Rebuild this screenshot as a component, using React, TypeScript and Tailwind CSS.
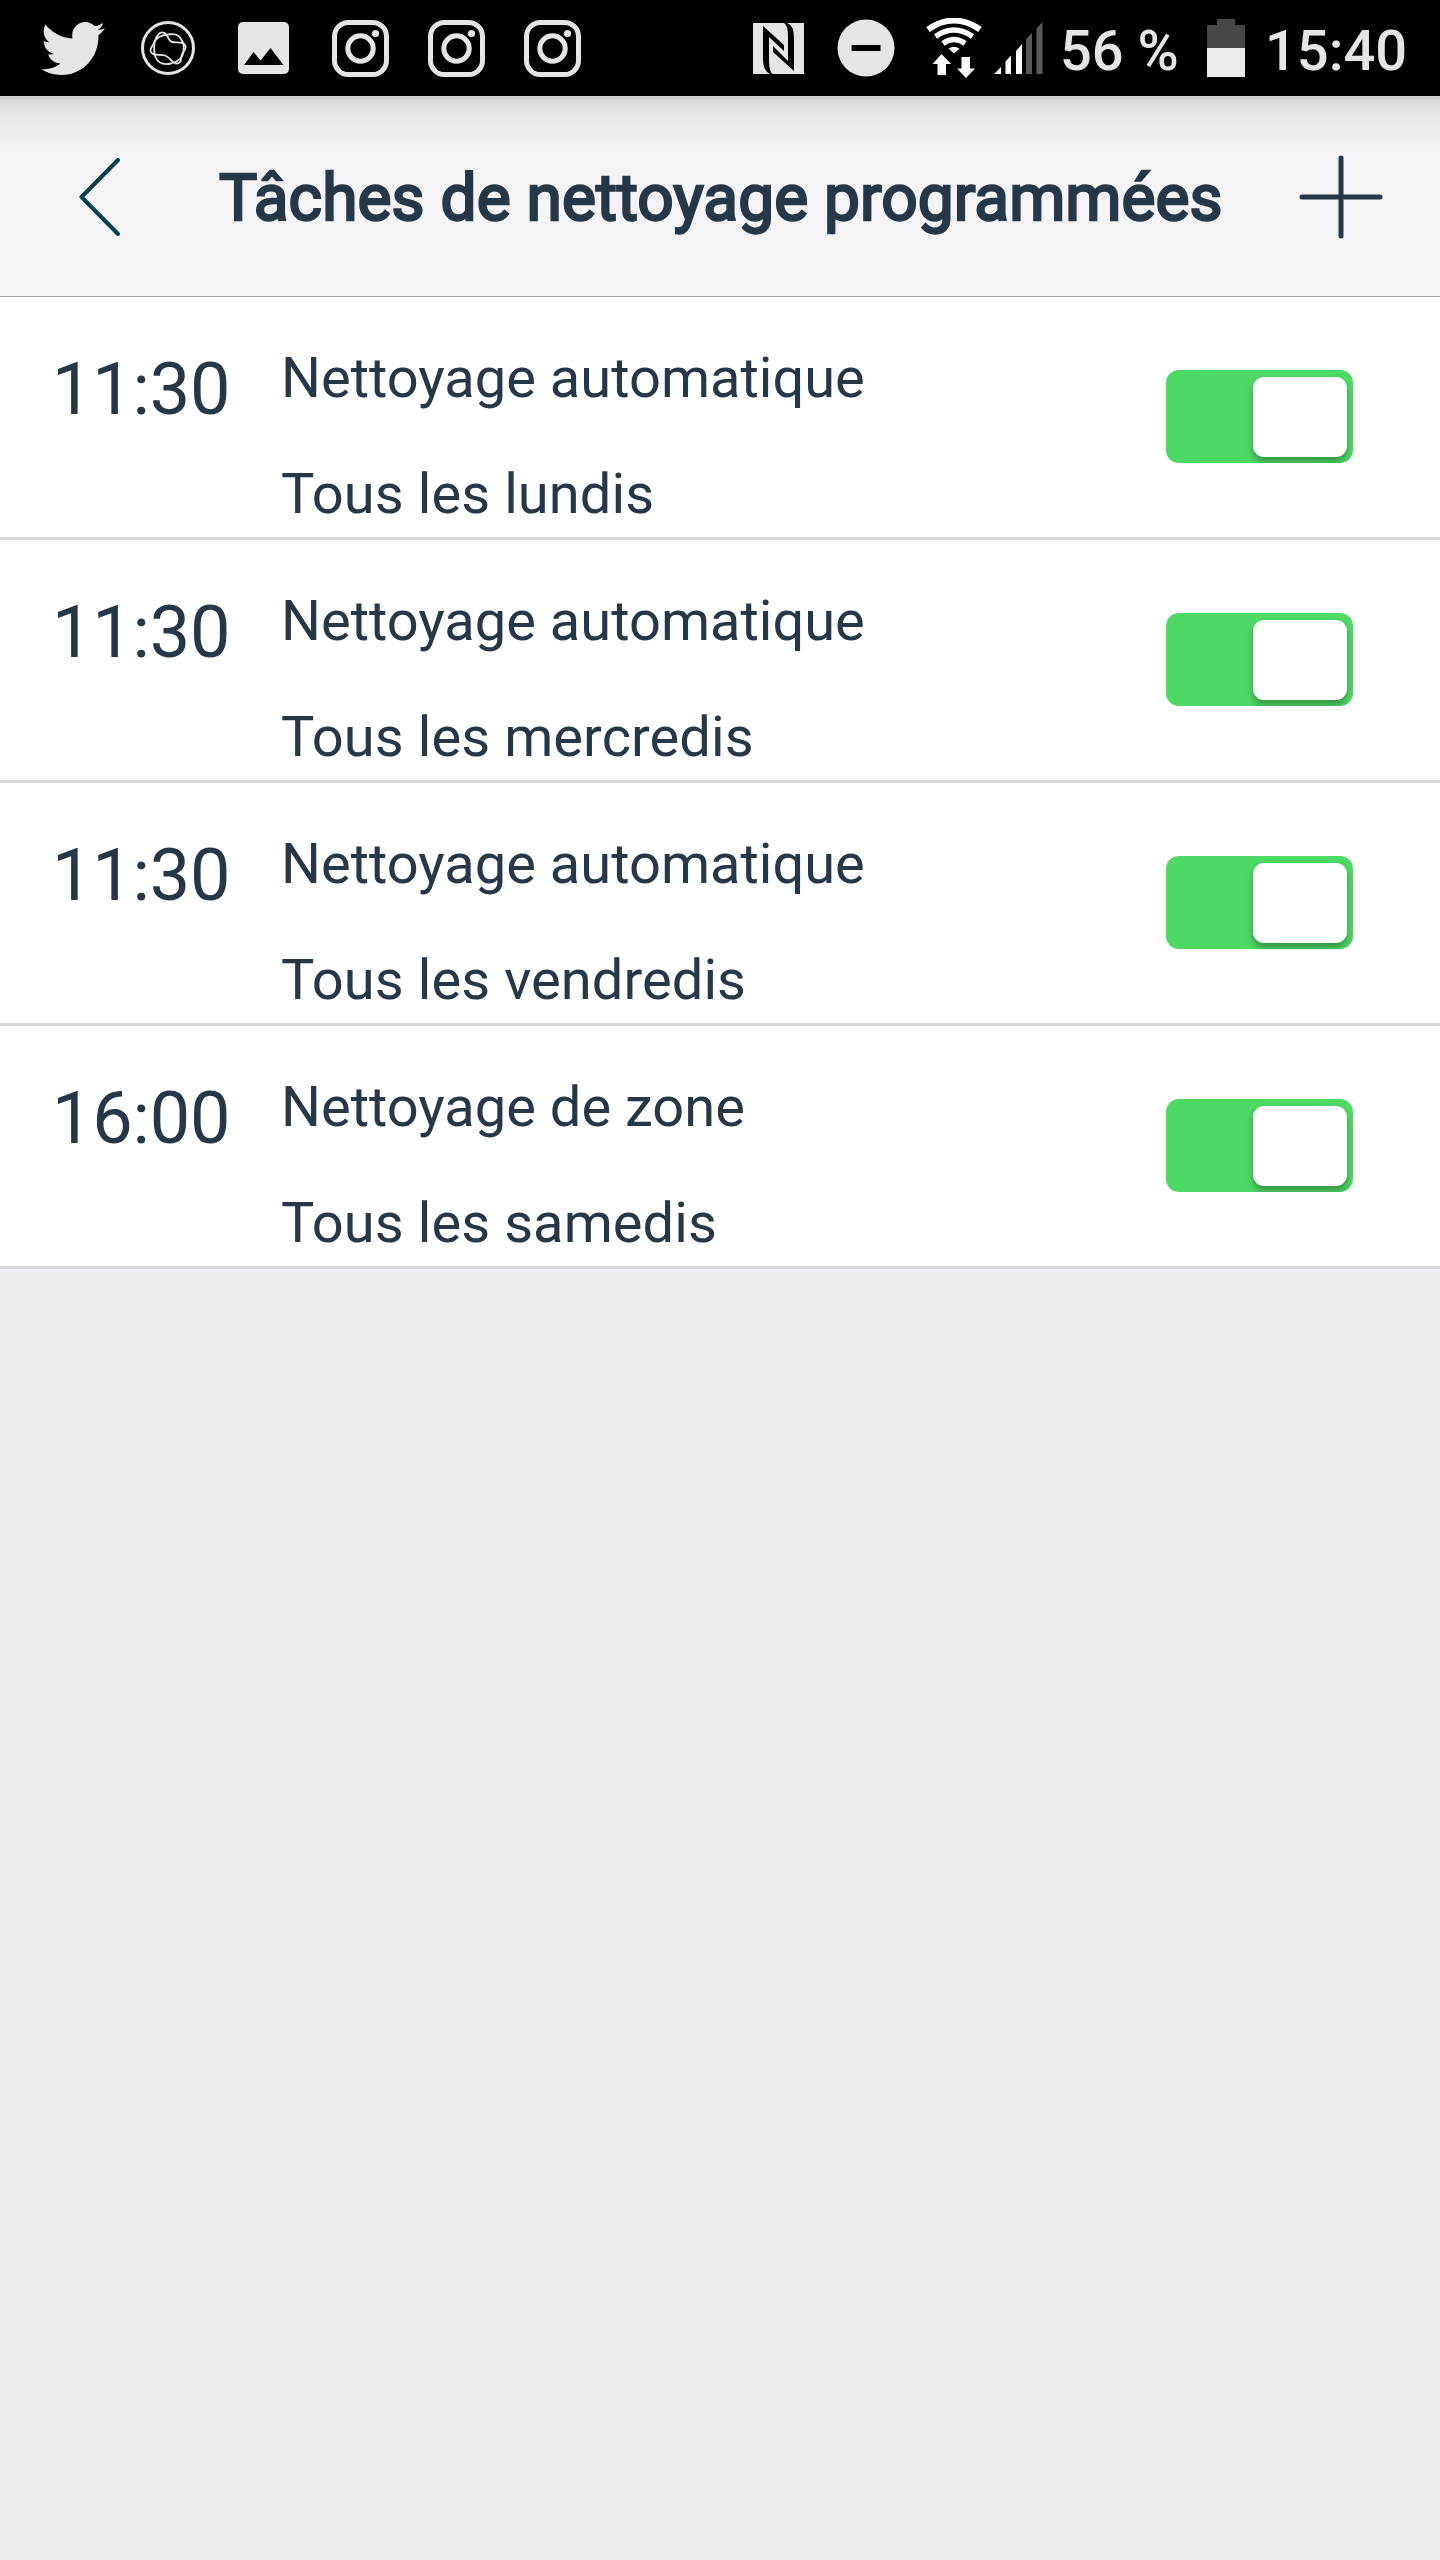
import React from 'react';

interface Task {
  time: string;
  mode: string;
  days: string;
}

const tasks: Task[] = [
  { time: '11:30', mode: 'Nettoyage automatique', days: 'Tous les lundis' },
  { time: '11:30', mode: 'Nettoyage automatique', days: 'Tous les mercredis' },
  { time: '11:30', mode: 'Nettoyage automatique', days: 'Tous les vendredis' },
  { time: '16:00', mode: 'Nettoyage de zone', days: 'Tous les samedis' },
];

const TwitterIcon = () => (
  <svg className="h-[53px] w-[64px]" viewBox="0 48 512 416" preserveAspectRatio="none" fill="currentColor">
    <path d="M459.37 151.716c.325 4.548.325 9.097.325 13.645 0 138.72-105.583 298.558-298.558 298.558-59.452 0-114.68-17.219-161.137-47.106 8.447.974 16.568 1.299 25.34 1.299 49.055 0 94.213-16.568 130.274-44.832-46.132-.975-84.792-31.188-98.112-72.772 6.498.974 12.995 1.624 19.818 1.624 9.421 0 18.843-1.3 27.614-3.573-48.081-9.747-84.143-51.98-84.143-102.985v-1.299c13.969 7.797 30.214 12.67 47.431 13.319-28.264-18.843-46.781-51.005-46.781-87.391 0-19.492 5.197-37.36 14.294-52.954 51.655 63.675 129.3 105.258 216.365 109.807-1.624-7.797-2.599-15.918-2.599-24.04 0-57.828 46.782-104.934 104.934-104.934 30.213 0 57.502 12.67 76.67 33.137 23.715-4.548 46.456-13.32 66.599-25.34-7.798 24.366-24.366 44.833-46.132 57.827 21.117-2.273 41.584-8.122 60.426-16.243-14.292 20.791-32.161 39.308-52.628 54.253z" />
  </svg>
);

const CircleIcon = () => (
  <svg className="size-[54px]" viewBox="0 0 54 54" fill="none" stroke="currentColor">
    <circle cx="27" cy="27" r="25.500" strokeWidth="3" />
    <g strokeWidth="1.800">
      <path d="M14 20C16 14 18 11 22 11.500C27 12 27 20 31 21C36 22 43 20 44.500 25C45.500 29 41 31 40.500 35C40 39 40 42 36 42.500C31 43 29 36 24 34.500C18 33 10 35 9.500 30C9 26 13 24 14 20Z" />
      <path d="M13.500 22C14 17 21 14 27 13.500C33 12.500 37 13 40 18C43 23 43 24 42.500 30C42 38 36 41 30 42.500C23 44 17 42 14.500 36C13 32 13 26 13.500 22Z" />
    </g>
  </svg>
);

const PictureIcon = () => (
  <svg className="h-[52px] w-[51px]" viewBox="0 0 51 52">
    <rect width="51" height="52" rx="5" fill="currentColor" />
    <path d="M6 43 L15.500 30 L22.500 38.500 L32.500 26 L45.500 43Z" fill="#000" />
  </svg>
);

const InstagramIcon = () => (
  <svg className="size-[57px]" viewBox="0 0 57 57" fill="none" stroke="currentColor" strokeWidth="5">
    <rect x="2.500" y="2.500" width="52" height="52" rx="14" />
    <circle cx="28.500" cy="28.500" r="12.700" />
    <circle cx="43.500" cy="13.500" r="3.600" fill="currentColor" stroke="none" />
  </svg>
);

const NfcIcon = () => (
  <svg className="h-[51px] w-[51px]" viewBox="0 0 51 51">
    <rect width="51" height="51" fill="currentColor" />
    <path d="M10 3 L31 22 V28 L16 14 V37 Q16 50 20 51 H17 Q10 48 10 36Z" fill="#000" />
    <path d="M41 48 L20 29 V23 L35 38 V14 Q35 2 31 0 H34 Q41 2 41 15Z" fill="#000" />
  </svg>
);

const DoNotDisturbIcon = () => (
  <svg className="size-[58px]" viewBox="0 0 58 58">
    <circle cx="29" cy="29" r="28.500" fill="currentColor" />
    <rect x="14.500" y="26" width="29" height="6" fill="#000" />
  </svg>
);

const WifiIcon = () => (
  <svg className="h-[60px] w-[56px]" viewBox="0 0 56 60" fill="none" stroke="#fff">
    <path d="M2 11.500 Q28 -6.500 54 11.500" strokeWidth="6" />
    <path d="M9.500 18.500 Q28 5.500 46.500 18.500" strokeWidth="5.500" />
    <path d="M17 25.500 Q28 17.500 39 25.500" strokeWidth="5.500" />
    <path d="M22.500 30.500 Q28 27 33.500 30.500 L28 35.500Z" fill="#fff" stroke="none" />
    <path d="M15.500 36 L25 46 H20 V57 H11.500 V46 H6.500Z" fill="#fff" stroke="none" />
    <path d="M40 60 L49 50.500 H44 V39 H35.500 V50.500 H31Z" fill="#fff" stroke="none" />
  </svg>
);

const SignalIcon = () => (
  <svg className="h-[52px] w-[49px]" viewBox="0 0 49 52" fill="#fff">
    <path d="M0 52 L7 45 V52Z M11.500 52 V39.500 L17 33.500 V52Z M22 52 V29 L28 22 V52Z" />
    <path d="M32 52 V17 L38 11 V52Z M42.500 52 V6.500 L48.500 0 V52Z" fill="#5a5a5a" />
  </svg>
);

const BatteryIcon = () => (
  <svg className="h-[58px] w-[38px]" viewBox="0 0 38 58">
    <path d="M0 6 H10 V0 H28 V6 H38 V29 H0Z" fill="#464646" />
    <rect y="29" width="38" height="29" fill="#ebebeb" />
  </svg>
);

const StatusBar = () => (
  <div className="flex h-24 items-center bg-black pl-[41px] text-[56px] leading-none font-medium text-[#e5e5e5]">
    <TwitterIcon />
    <div className="ml-[36px]"><CircleIcon /></div>
    <div className="ml-[43px]"><PictureIcon /></div>
    <div className="ml-[43px] flex gap-[39px]">
      <InstagramIcon />
      <InstagramIcon />
      <InstagramIcon />
    </div>
    <div className="ml-[172px]"><NfcIcon /></div>
    <div className="ml-[33px]"><DoNotDisturbIcon /></div>
    <div className="ml-[31px]"><WifiIcon /></div>
    <div className="ml-[12px]"><SignalIcon /></div>
    <div className="ml-[17px] w-[147px] whitespace-nowrap pt-[6px]">56 %</div>
    <div><BatteryIcon /></div>
    <div className="ml-[20px] pt-[6px]">15:40</div>
  </div>
);

const Header = () => (
  <div className="flex h-[201px] items-center border-b border-[#a3a3a8] bg-[#f4f4f7] bg-[linear-gradient(to_bottom,#cfcfcf_0px,#cfcfcf_3px,#dadadc_4px,#e6e6e7_20px,#efeff1_38px,#f4f4f7_54px)] pt-[2px] pl-[79px]">
    <svg className="h-[78px] w-[41px]" viewBox="0 0 41 78" fill="none" stroke="#043f4e" strokeWidth="4">
      <path d="M39 2 L2.500 39 L39 76" strokeLinecap="round" strokeLinejoin="round" />
    </svg>
    <h1 className="ml-[99px] w-[1002px] pt-[3px] text-[64px] leading-none font-normal tracking-[0.06px] whitespace-nowrap text-[#263747] [-webkit-text-stroke:2.4px_#263747]">
      Tâches de nettoyage programmées
    </h1>
    <svg className="ml-[78px] size-[84px]" viewBox="0 0 84 84" stroke="#263747" strokeWidth="5" strokeLinecap="round">
      <path d="M42 3 V81 M3 42 H81" />
    </svg>
  </div>
);

const Toggle = () => (
  <div className="flex h-[93px] w-[187px] justify-end overflow-hidden rounded-[13px] bg-[#4cd964] pt-[6.5px] pr-[6.5px]">
    <div className="h-[80px] w-[94px] rounded-[11px] bg-white shadow-[0_5px_7px_rgba(0,0,0,0.3)]" />
  </div>
);

const TaskRow = ({ task }: { task: Task }) => (
  <div className="flex h-[243px] border-b-[3px] border-[#d7d7db] bg-white text-[#263747]">
    <div className="w-[281px] pt-[55px] pl-[52px] text-[72px] leading-[76px] tracking-[-0.2px]">{task.time}</div>
    <div className="flex-1 pt-[46px] text-[56px] leading-[70px] whitespace-nowrap">
      <div>{task.mode}</div>
      <div className="mt-[46px] tracking-[0.08px]">{task.days}</div>
    </div>
    <div className="pt-[73px] pr-[87px]">
      <Toggle />
    </div>
  </div>
);

const App: React.FC = () => {
  return (
    <div className="h-[2560px] w-[1440px] overflow-hidden bg-[#efeef4] font-['Roboto',sans-serif]">
      <StatusBar />
      <Header />
      {tasks.map((task) => (
        <TaskRow key={task.days} task={task} />
      ))}
    </div>
  );
};

export default App;
